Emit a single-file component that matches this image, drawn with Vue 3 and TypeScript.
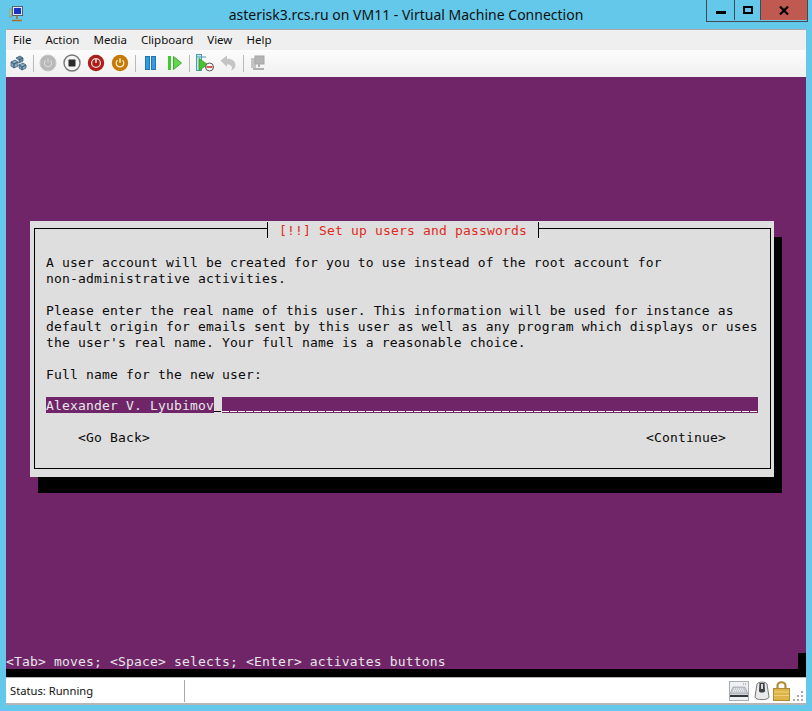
<script setup lang="ts">
const menus: string[] = ['File', 'Action', 'Media', 'Clipboard', 'View', 'Help']
const copy: string[][] = [
  ['A user account will be created for you to use instead of the root account for', 'non-administrative activities.'],
  ['Please enter the real name of this user. This information will be used for instance as', 'default origin for emails sent by this user as well as any program which displays or uses', "the user's real name. Your full name is a reasonable choice."],
  ['Full name for the new user:'],
]
</script>

<template>
  <div class="window">
    <header class="titlebar">
      <svg class="app-icon" width="14" height="16" viewBox="0 0 14 16">
        <rect x="0" y="3" width="3" height="8" fill="#9fc29a" stroke="#7d8d7a" stroke-width=".6" />
        <rect x="3.500" y="0.500" width="10" height="9" fill="#dfe8f2" stroke="#56606e" />
        <rect x="5" y="2" width="7" height="6" fill="#1733c8" />
        <path d="M8 10v3M3 14.500h10" stroke="#a8702c" stroke-width="1.600" />
      </svg>
      <div class="title">asterisk3.rcs.ru on VM11 - Virtual Machine Connection</div>
      <div class="controls">
        <div class="ctl min"><span></span></div>
        <div class="ctl max"><span></span></div>
        <div class="ctl close">
          <svg width="10" height="9" viewBox="0 0 10 9"><path d="M1 .5 9 8.500M9 .5 1 8.500" stroke="#000" stroke-width="2.200" /></svg>
        </div>
      </div>
    </header>

    <div class="client">
      <nav class="menubar">
        <span v-for="m in menus" :key="m">{{ m }}</span>
      </nav>

      <div class="toolbar">
        <svg class="tool cad" width="17" height="16" viewBox="0 0 17 16">
          <g stroke="#3d5f78" stroke-width=".8" fill="#86acc4">
            <path d="M1 7l4-2 3 2-4 2zM1 7v4l3 2V9zM4 9v4l4-2V7z" />
            <path d="M6 3l4-2 3 2-4 2zM9 5v3l4-2V3z" fill="#5f8cab" />
            <path d="M9 10l4-2 3 2-4 2zM9 10v3l3 2v-3zM12 12v3l4-2v-3z" />
          </g>
        </svg>
        <i class="sep s1"></i>
        <svg class="tool" width="18" height="18" viewBox="0 0 18 18">
          <circle cx="9" cy="9" r="8" fill="#b8b8b8" stroke="#c9c9c9" />
          <path d="M6.500 6.500a3.600 3.600 0 1 0 5 0M9 4.500v4" fill="none" stroke="#d8d8d8" stroke-width="1.200" />
        </svg>
        <svg class="tool" width="18" height="18" viewBox="0 0 18 18">
          <circle cx="9" cy="9" r="8" fill="#f4f4f4" stroke="#777" stroke-width="1.400" />
          <rect x="5.500" y="5.500" width="7" height="7" rx=".8" fill="#2b2b2b" />
        </svg>
        <svg class="tool" width="18" height="18" viewBox="0 0 18 18">
          <circle cx="9" cy="9" r="8.200" fill="#ab1e19" />
          <circle cx="9" cy="9" r="4.400" fill="none" stroke="#f3d9d6" stroke-width="1.300" />
          <path d="M9 5v4" stroke="#f7e6e4" stroke-width="1.500" />
        </svg>
        <svg class="tool" width="18" height="18" viewBox="0 0 18 18">
          <circle cx="9" cy="9" r="8.200" fill="#c67a08" />
          <path d="M6.500 6.300a3.800 3.800 0 1 0 5 0" fill="none" stroke="#fbeacb" stroke-width="1.300" />
          <path d="M9 4.200v4.500" stroke="#fbeacb" stroke-width="1.500" />
        </svg>
        <i class="sep s2"></i>
        <svg class="tool pause" width="11" height="14" viewBox="0 0 11 14">
          <rect x=".5" y=".5" width="4" height="13" fill="#2f9be2" stroke="#2474b4" />
          <rect x="6.500" y=".5" width="4" height="13" fill="#2f9be2" stroke="#2474b4" />
        </svg>
        <svg class="tool play" width="14" height="14" viewBox="0 0 14 14">
          <rect x="0" y="0" width="3" height="14" fill="#3ecb2c" />
          <path d="M5.500 .5 13.500 7 5.500 13.500z" fill="#63d74e" stroke="#49a23a" />
        </svg>
        <i class="sep s3"></i>
        <svg class="tool snap" width="18" height="18" viewBox="0 0 18 18">
          <rect x=".5" y=".5" width="5" height="16" fill="#bfe6f0" stroke="#4f9bb0" />
          <path d="M1 3h9" stroke="#4f9bb0" />
          <path d="M3 4.500 11.500 10.500 3 16.500z" fill="#49c22f" stroke="#2f8f1e" stroke-width=".7" />
          <circle cx="13.500" cy="13" r="4" fill="#f7f7f7" stroke="#555" />
          <path d="M10.500 13h6" stroke="#c8332c" stroke-width="1.600" />
        </svg>
        <svg class="tool undo" width="16" height="16" viewBox="0 0 16 16">
          <path d="M.5 5.500 7 .5v3.200c5 0 8.500 2.300 8.500 6.300 0 2.600-2 4.700-4.500 5.500 1-1.400 1.400-2.800.6-4.100C10.800 10 9.200 9.300 7 9.300v2.700z" fill="#c4c4c4" />
        </svg>
        <i class="sep s4"></i>
        <svg class="tool ehs" width="16" height="16" viewBox="0 0 16 16">
          <rect x="1" y="3" width="5" height="10" fill="#c4c4c4" />
          <rect x="5" y="1" width="9" height="8" fill="#b4b4b4" stroke="#a6a6a6" />
          <path d="M9 9v3M3 14h11" stroke="#b0b0b0" stroke-width="2" />
        </svg>
      </div>

      <main class="screen">
        <div class="dialog">
          <div class="title-tab">[!!] Set up users and passwords</div>
          <div class="frame">
            <p v-for="(para, i) in copy" :key="i" class="para">
              <span v-for="line in para" :key="line" class="line">{{ line }}</span>
            </p>
            <div class="entry">
              <span class="value">Alexander V. Lyubimov</span><span class="cursor"></span><span class="blank"></span>
            </div>
            <div class="buttons">
              <span>&lt;Go Back&gt;</span>
              <span>&lt;Continue&gt;</span>
            </div>
          </div>
        </div>
        <div class="hint-row">
          <span class="hint">&lt;Tab&gt; moves; &lt;Space&gt; selects; &lt;Enter&gt; activates buttons</span>
          <span class="hint-end"></span>
        </div>
      </main>
      <div class="under"></div>

      <footer class="status">
        <div class="status-text">Status: Running</div>
        <div class="tray">
          <svg class="kbd" width="20" height="20" viewBox="0 0 20 20">
            <rect x=".5" y=".5" width="19" height="19" fill="#eef0f2" stroke="#a9adb2" />
            <path d="M14 3h1M16 3h1" stroke="#888" />
            <path d="M4 6h12l3 7H1z" fill="#c5cad0" stroke="#8f959b" stroke-width=".6" />
            <path d="M5 8h10M4 10h12" stroke="#fff" stroke-dasharray="1 1" />
            <rect x="1" y="14" width="18" height="2" fill="#33383d" />
          </svg>
          <svg width="16" height="20" viewBox="0 0 16 20">
            <path d="M3 3c1-2.500 9-2.500 10 0l2 13c0 3.500-14 3.500-14 0z" fill="#e8eaec" stroke="#777" />
            <path d="M5.500 2 5 10c0 2 6 2 6 0l-.5-8z" fill="#3c3f44" />
            <rect x="7" y="3" width="2" height="5" fill="#d8dadc" />
          </svg>
          <svg width="17" height="20" viewBox="0 0 17 20">
            <path d="M4.500 8V5C4.500 0 12.500 0 12.500 5v3" fill="none" stroke="#b08a35" stroke-width="2.200" />
            <rect x=".5" y="7.500" width="16" height="12" fill="#dcb44a" stroke="#b08a35" />
            <path d="M1 11h15M1 14.500h15" stroke="#efd07a" />
          </svg>
          <svg class="grip" width="11" height="11" viewBox="0 0 11 11" fill="#a8a8a8">
            <rect x="8" y="0" width="2" height="2" /><rect x="4" y="4" width="2" height="2" /><rect x="8" y="4" width="2" height="2" />
            <rect x="0" y="8" width="2" height="2" /><rect x="4" y="8" width="2" height="2" /><rect x="8" y="8" width="2" height="2" />
          </svg>
        </div>
      </footer>
    </div>
  </div>
</template>

<style scoped>
.window {
  width: 812px;
  height: 711px;
  background: #63c8ea;
  display: flex;
  flex-direction: column;
  overflow: hidden;
}
.titlebar {
  height: 29px;
  flex: none;
  display: grid;
  grid-template-columns: 1fr auto 1fr;
  align-items: start;
}
.app-icon {
  margin: 6px 0 0 9px;
}
.title {
  font: 14px/29px "Noto Sans", sans-serif;
  color: #111;
  white-space: nowrap;
}
.controls {
  justify-self: end;
  margin-right: 4px;
  height: 21px;
  display: flex;
  border: 1px solid #3e4b52;
  border-top: 0;
}
.ctl {
  height: 20px;
  display: flex;
  align-items: center;
  justify-content: center;
}
.min {
  width: 27px;
  border-right: 1px solid #3e4b52;
}
.min span {
  width: 10px;
  height: 3px;
  margin-top: 5px;
  background: #000;
}
.max {
  width: 25px;
  border-right: 1px solid #3e4b52;
}
.max span {
  width: 10px;
  height: 8px;
  box-sizing: border-box;
  border: 2px solid #000;
}
.close {
  width: 46px;
  background: #c0594f;
}
.client {
  margin: 0 6px;
  display: flex;
  flex-direction: column;
  flex: none;
}
.menubar {
  height: 21px;
  box-sizing: border-box;
  border-top: 1px solid #a9a9a9;
  background: #efefef;
  display: flex;
  gap: 14px;
  padding-left: 7px;
  font: 11.5px/19px "Noto Sans", sans-serif;
  color: #101010;
}
.toolbar {
  height: 27px;
  box-sizing: border-box;
  background: linear-gradient(#fdfdfd, #efefef);
  display: flex;
  align-items: center;
  padding: 0 0 1px 4px;
}
.tool {
  flex: none;
}
.cad {
  margin-right: 6px;
}
.sep {
  width: 1px;
  height: 17px;
  background: #b9b9b9;
  flex: none;
}
.s1 {
  margin-right: 5px;
}
.s1 ~ .tool {
  margin-right: 6px;
}
.s2 {
  margin-right: 9px;
}
.s2 ~ .pause {
  margin-right: 12px;
}
.s2 ~ .play {
  margin-right: 7px;
}
.s3 {
  margin-right: 6px;
}
.s3 ~ .snap {
  margin-right: 6px;
}
.s3 ~ .undo {
  margin-right: 7px;
}
.s4 {
  margin-right: 6px;
}
.screen {
  height: 592px;
  box-sizing: border-box;
  background: #6f2568;
  display: flex;
  flex-direction: column;
  padding-top: 144px;
  font: 13px/18px "DejaVu Sans Mono", monospace;
  letter-spacing: 0.17px;
  white-space: pre;
}
.dialog {
  position: relative;
  width: 744px;
  height: 256px;
  box-sizing: border-box;
  margin-left: 24px;
  padding: 7px 3px 8px 4px;
  background: #dedede;
  box-shadow: 8px 16px 0 #000;
  color: #0a0a0a;
}
.title-tab {
  position: absolute;
  left: 237px;
  top: 1px;
  width: 272px;
  height: 16px;
  box-sizing: border-box;
  padding-left: 11px;
  background: #dedede;
  border-left: 1px solid #000;
  border-right: 1px solid #000;
  color: #e02a1c;
}
.frame {
  height: 241px;
  box-sizing: border-box;
  border: 1px solid #000;
  padding: 25px 12px 0 11px;
}
.para {
  margin: 0 0 16px;
}
.line {
  display: block;
  height: 16px;
}
.entry {
  display: flex;
  height: 16px;
  margin-top: -1px;
  color: #e8e8e8;
}
.value {
  background: #6f2568;
}
.cursor {
  width: 8px;
  background: linear-gradient(#0a0a0a, #0a0a0a) 0 14px / 7px 1px no-repeat;
}
.blank {
  flex: 1;
  background:
    repeating-linear-gradient(90deg, #f4f4f4 0 7px, #6f2568 7px 8px) 0 14px / 100% 1px no-repeat,
    #6f2568;
}
.buttons {
  display: flex;
  height: 16px;
  justify-content: space-between;
  padding: 0 32px;
  margin-top: 16px;
}
.hint-row {
  margin-top: auto;
  height: 16px;
  display: flex;
  justify-content: space-between;
  color: #e6e6e6;
}
.hint-end {
  width: 8px;
  background: #000;
}
.under {
  height: 8px;
  background: #000;
}
.status {
  height: 28px;
  box-sizing: border-box;
  background: #fff;
  border-top: 1px solid #b5b5b5;
  border-bottom: 2px solid #b5b5b5;
  display: flex;
  align-items: center;
  justify-content: space-between;
}
.status-text {
  width: 174px;
  height: 22px;
  margin-top: 1px;
  padding-left: 4px;
  font: 11.2px/22px "Noto Sans", sans-serif;
  color: #111;
  border-right: 1px solid #a8a8a8;
}
.tray {
  display: flex;
  align-items: center;
  gap: 3px;
  padding-right: 2px;
}
.kbd {
  margin-right: 2px;
}
.grip {
  align-self: flex-end;
  margin-bottom: -1px;
}
</style>

<style>
body {
  background: #63c8ea;
}
</style>
